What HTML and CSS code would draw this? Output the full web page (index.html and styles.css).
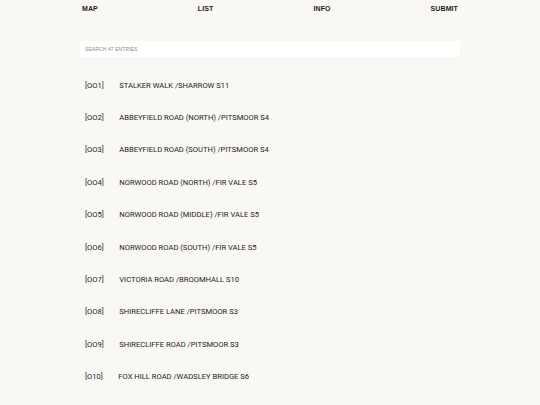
FILE: index.html
```html
<!DOCTYPE html>
<html>
<head>
<meta charset="utf-8">
<link rel="stylesheet" href="styles.css">
</head>
<body>
<div class="wrap">
  <nav class="nav">
    <a class="nav-item">MAP</a>
    <a class="nav-item">LIST</a>
    <a class="nav-item">INFO</a>
    <a class="nav-item">SUBMIT</a>
  </nav>
  <div class="search"><span class="placeholder">SEARCH 47 ENTRIES</span></div>
  <ul class="list">
    <li class="row"><span class="num">[OO1]</span><span class="name">STALKER WALK /SHARROW S11</span></li>
    <li class="row"><span class="num">[OO2]</span><span class="name">ABBEYFIELD ROAD (NORTH) /PITSMOOR S4</span></li>
    <li class="row"><span class="num">[OO3]</span><span class="name">ABBEYFIELD ROAD (SOUTH) /PITSMOOR S4</span></li>
    <li class="row"><span class="num">[OO4]</span><span class="name">NORWOOD ROAD (NORTH) /FIR VALE S5</span></li>
    <li class="row"><span class="num">[OO5]</span><span class="name">NORWOOD ROAD (MIDDLE) /FIR VALE S5</span></li>
    <li class="row"><span class="num">[OO6]</span><span class="name">NORWOOD ROAD (SOUTH) /FIR VALE S5</span></li>
    <li class="row"><span class="num">[OO7]</span><span class="name">VICTORIA ROAD /BROOMHALL S10</span></li>
    <li class="row"><span class="num">[OO8]</span><span class="name">SHIRECLIFFE LANE /PITSMOOR S3</span></li>
    <li class="row"><span class="num">[OO9]</span><span class="name">SHIRECLIFFE ROAD /PITSMOOR S3</span></li>
    <li class="row"><span class="num">[O10]</span><span class="name">FOX HILL ROAD /WADSLEY BRIDGE S6</span></li>
  </ul>
</div>
</body>
</html>
```

FILE: styles.css
```css
html, body {
  margin: 0;
  padding: 0;
  background: #f9f8f5;
  font-family: Roboto, "Liberation Sans", Arial, sans-serif;
  color: #1c1c1c;
}
.wrap {
  width: 380px;
  margin-left: 80px;
}
.nav {
  display: flex;
  justify-content: space-between;
  padding: 4px 2px 0 2px;
  height: 41px;
  box-sizing: border-box;
}
.nav-item {
  font-family: "Liberation Sans", Arial, sans-serif;
  font-size: 7px;
  font-weight: bold;
  line-height: 10px;
  letter-spacing: 0.1px;
  color: #1c1c1c;
}
.search {
  background: #ffffff;
  height: 16px;
  display: flex;
  align-items: center;
  padding-left: 5px;
}
.placeholder {
  font-family: "Liberation Sans", Arial, sans-serif;
  font-size: 5px;
  color: #8a8a8a;
  letter-spacing: 0.1px;
}
.list {
  list-style: none;
  margin: 12px 0 0 0;
  padding: 0 0 0 5px;
}
.row {
  display: flex;
  align-items: center;
  height: 32.4px;
  font-size: 7.6px;
}
.num {
  margin-right: 15.5px;
  color: #1c1c1c;
}
.name {
  color: #1c1c1c;
}
```
